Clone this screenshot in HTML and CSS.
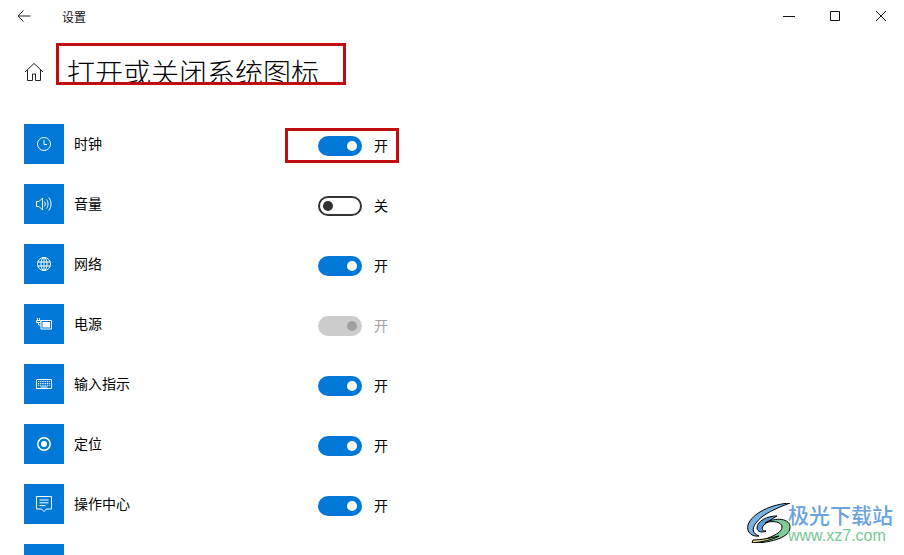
FILE: index.html
```html
<!DOCTYPE html>
<html lang="zh-CN">
<head>
  <meta charset="UTF-8">
  <title>设置</title>
  <link rel="stylesheet" href="styles.css">
</head>
<body>

<div class="titlebar">
  <svg class="back-icon" width="16" height="16" viewBox="0 0 16 16"><path d="M14.500 8H2M7.500 2.500L2 8l5.500 5.500" /></svg>
  <span class="app-name">设置</span>
  <div class="window-btns">
    <svg width="12" height="12" viewBox="0 0 12 12"><path d="M0 6.500h12" /></svg>
    <svg width="12" height="12" viewBox="0 0 12 12"><path d="M1.500 1.500h9v9h-9z" /></svg>
    <svg width="12" height="12" viewBox="0 0 12 12"><path d="M1 1l10 10M11 1L1 11" /></svg>
  </div>
</div>

<div class="page-head">
  <svg class="home-icon" width="20" height="20" viewBox="0 0 20 20"><path d="M1 10L10 1.500l9 8.500M3.500 8v10.500h5v-6.500h3v6.500h5V8" /></svg>
  <div class="title-wrap"><h1>打开或关闭系统图标</h1></div>
</div>

<div class="list">
  <div class="row">
    <div class="tile"><svg viewBox="0 0 16 16"><circle cx="8" cy="8" r="6.500" /><path d="M8 4v4.500h3" /></svg></div>
    <span class="name">时钟</span>
    <div class="toggle on"></div>
    <span class="state">开</span>
  </div>
  <div class="row">
    <div class="tile"><svg viewBox="0 0 16 16"><path d="M.5 5.500h2.500L6.500 2v12L3 10.500H.5zM8.500 5.500c1 1.600 1 3.400 0 5M10.500 3.500c2 2.800 2 6.200 0 9M12.800 1.500c3 4 3 9 0 13" /></svg></div>
    <span class="name">音量</span>
    <div class="toggle off"></div>
    <span class="state">关</span>
  </div>
  <div class="row">
    <div class="tile"><svg viewBox="0 0 16 16"><circle cx="8" cy="8" r="6.500" /><ellipse cx="8" cy="8" rx="3" ry="6.500" /><path d="M1.500 6h13M1.500 10h13M8 1.500v13" /></svg></div>
    <span class="name">网络</span>
    <div class="toggle on"></div>
    <span class="state">开</span>
  </div>
  <div class="row">
    <div class="tile"><svg viewBox="0 0 16 16"><path d="M5 4.500h10.500v8.500H5zM.5 4.500h4v2h-4zM1.500 2v2.500M3.500 2v2.500M2.500 6.500V9H5" /><path class="fill" d="M6.500 6h7.500v5.500H6.500z" /></svg></div>
    <span class="name">电源</span>
    <div class="toggle disabled"></div>
    <span class="state muted">开</span>
  </div>
  <div class="row">
    <div class="tile"><svg viewBox="0 0 16 16"><path d="M.5 3.500h15v9H.5z" /><path d="M2 5.500h12M2 7.500h12M2 9.300h12" stroke-dasharray="1 .8" /><path d="M4.500 11h7" /></svg></div>
    <span class="name">输入指示</span>
    <div class="toggle on"></div>
    <span class="state">开</span>
  </div>
  <div class="row">
    <div class="tile"><svg viewBox="0 0 16 16"><circle class="thick" cx="8" cy="8" r="6.200" /><circle class="fill" cx="8" cy="8" r="3" /></svg></div>
    <span class="name">定位</span>
    <div class="toggle on"></div>
    <span class="state">开</span>
  </div>
  <div class="row">
    <div class="tile"><svg viewBox="0 0 16 16"><path d="M.5.500h15v12.500H10.500L8 15.500 5.500 13H.5zM3.500 4h9M3.500 6.800h9M3.500 9.600h6" /></svg></div>
    <span class="name">操作中心</span>
    <div class="toggle on"></div>
    <span class="state">开</span>
  </div>
  <div class="row">
    <div class="tile"></div>
  </div>
</div>

<!-- red annotation boxes -->
<div class="mark mark-title"></div>
<div class="mark mark-toggle"></div>

<div class="watermark">
  <svg class="wm-logo" width="44" height="40" viewBox="0 0 44 40">
    <path fill="#7ab3e2" d="M43 0C25 1 5 10 1 22c-2 8 5 12 11 11-6-2-8-7-3-13C15 11 30 5 43 0z" />
    <path fill="#5d9ad6" d="M30 13c-10 0-20 5-20 12 0 4 6 5 9 3-4 0-5-3-2-6 3-3 8-6 13-9z" />
    <path fill="#7fcb98" d="M18 20c8-3 17-1 17 4 0 7-15 12-30 16 15 0 37-4 38-15 1-10-15-11-25-5z" />
    <path fill="#e6de80" d="M5 40c10-1 20-3 27-7-8 2-18 4-26 4z" />
  </svg>
  <div class="wm-text">
    <div class="wm-name">极光下载站</div>
    <div class="wm-url">www.xz7.com</div>
  </div>
</div>

</body>
</html>
```

FILE: styles.css
```css
html, body { height: 100%; }
body {
  margin: 0; background: #fff; color: #000; overflow: hidden; position: relative;
  font-family: "Noto Sans CJK SC", "Liberation Sans", sans-serif;
}
svg { fill: none; stroke: currentColor; stroke-width: 1; }

.titlebar { display: flex; align-items: center; height: 32px; padding-left: 16px; }
.back-icon { color: #222; }
.app-name { margin-left: 30px; font-size: 12px; color: #111; }
.window-btns { display: flex; gap: 34px; margin-left: auto; padding-right: 17px; color: #111; }

.page-head { display: flex; align-items: flex-start; height: 92px; }
.home-icon { margin: 30px 0 0 24px; color: #222; }
.title-wrap { margin-left: 23px; margin-top: 14px; height: 36px; overflow: hidden; }
h1 { margin: 0; font-size: 28px; font-weight: 300; line-height: 52px; white-space: nowrap; color: #000; }

.list { display: flex; flex-direction: column; gap: 20px; padding-left: 24px; }
.row { display: flex; align-items: flex-start; height: 40px; }
.tile {
  width: 40px; height: 40px; background: #0078d7; color: #fff; flex: none;
  display: flex; align-items: center; justify-content: center;
}
.tile svg { width: 16px; height: 16px; }
.tile .fill { fill: currentColor; stroke: none; }
.tile .thick { stroke-width: 1.500; }
.name { width: 244px; margin-left: 10px; margin-top: 9px; font-size: 14px; line-height: 20px; flex: none; }

.toggle { width: 44px; height: 20px; margin-top: 12px; border-radius: 10px; box-sizing: border-box; display: flex; align-items: center; padding: 0 5px; flex: none; }
.toggle::after { content: ""; width: 10px; height: 10px; border-radius: 50%; }
.toggle.on { background: #0078d7; justify-content: flex-end; }
.toggle.on::after { background: #fff; }
.toggle.off { border: 2px solid #333; padding: 0 3px; }
.toggle.off::after { background: #333; }
.toggle.disabled { background: #ccc; justify-content: flex-end; }
.toggle.disabled::after { background: #a0a0a0; }

.state { margin-left: 12px; margin-top: 11px; font-size: 14px; line-height: 20px; }
.state.muted { color: #a0a0a0; }

.mark { position: absolute; box-sizing: border-box; border: 3px solid #c00d0d; }
.mark-title { left: 56px; top: 43px; width: 290px; height: 42px; }
.mark-toggle { left: 285px; top: 128px; width: 114px; height: 35px; }

.watermark { position: absolute; right: 11px; bottom: 10px; display: flex; align-items: center; background: #fff; }
.wm-text { margin-left: -3px; }
.wm-name { font-size: 21px; line-height: 26px; font-weight: 500; color: #6ba3dc; }
.wm-url { font-family: "Liberation Sans", sans-serif; font-size: 16px; line-height: 18px; color: #74c894; }
```
